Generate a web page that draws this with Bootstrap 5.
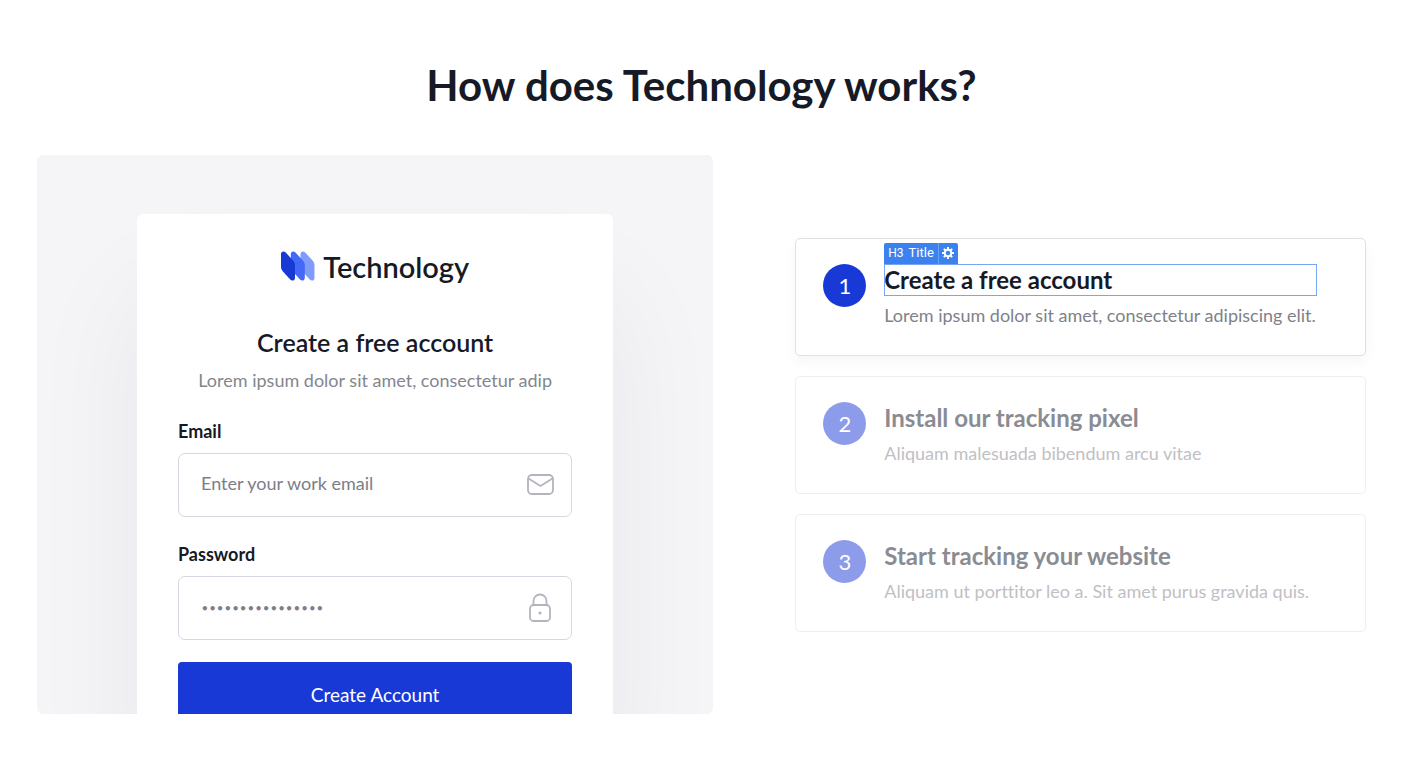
<!DOCTYPE html>
<html lang="en">
<head>
<meta charset="utf-8">
<meta name="viewport" content="width=device-width, initial-scale=1">
<title>How does Technology works?</title>
<link href="https://cdn.jsdelivr.net/npm/bootstrap@5.3.0/dist/css/bootstrap.min.css" rel="stylesheet">
<style>
  body { font-family: Lato, "Liberation Sans", sans-serif; font-variant-ligatures: none; color: #161a27; background: #fff; }
  .how-section { padding: 60px 37px; }
  .how-title { font-size: 42px; line-height: 50px; font-weight: 700; margin-bottom: 45px; }
  .how-grid { display: grid; grid-template-columns: 1.185fr 1fr; column-gap: 82px; align-items: center; }
  .preview-panel { background: #f5f5f7; border-radius: 6px; padding: 59px 100px 0; overflow: hidden; }
  .signup-card { background: #fff; border-radius: 6px; padding: 35px 41px 0; margin-bottom: -14px; box-shadow: 0 80px 120px rgba(20, 20, 80, .06); }
  .logo-text { font-size: 29px; line-height: 36px; font-weight: 600; }
  .signup-title { font-size: 25px; line-height: 30px; font-weight: 600; margin: 42px 0 11px; }
  .soft-text { font-size: 18px; line-height: 24px; color: #84868e; }
  .field-group { margin-top: 25px; }
  .soft-text + .field-group { margin-top: 27px; }
  .field-label { font-size: 18px; line-height: 24px; font-weight: 700; margin: 0 0 10px; }
  .field-box { height: 64px; padding: 0 60px 5px 22px; border: 1px solid #d6d6e0; border-radius: 7px; font-size: 18px; color: #161a27; }
  .field-box::placeholder { color: #7c7e88; opacity: 1; }
  .field-box.secret::placeholder { font-family: "DejaVu Sans", sans-serif; font-size: 12px; font-weight: 700; }
  .field-icon { position: absolute; right: 18px; top: 17px; pointer-events: none; }
  .btn-create { height: 66px; margin-top: 22px; font-size: 19px; color: #fff; background: #1939d7; border: 0; border-radius: 4px; }
  .btn-create:hover { color: #fff; background: #1530b8; }
  .step-list { gap: 20px; }
  .step-card { border: 1px solid #dfe0e6; border-radius: 5px; padding: 25px 48px 27px 27px; gap: 18px; background: #fff; }
  .step-card.current { box-shadow: 0 6px 14px rgba(20, 20, 60, .04); }
  .step-card.upcoming { border-color: #efeff2; }
  .step-number { flex: none; width: 43px; height: 43px; font-size: 22px; color: #fff; background: #1939d7; }
  .step-name { font-size: 24px; line-height: 32px; font-weight: 700; margin: 0 0 6px; }
  .step-note { font-size: 18px; line-height: 26px; color: #7f818a; margin: 0; }
  .upcoming .step-number { background: #8c9ceb; }
  .upcoming .step-name { color: #8a8c93; }
  .upcoming .step-note { color: #bfc0c5; }
  .step-name.selected { outline: 1px solid #78a6f7; outline-offset: -1px; }
  .element-tag { position: absolute; left: 0; bottom: 100%; height: 21px; font-family: Roboto, sans-serif; font-size: 13px; line-height: 20px; font-weight: 400; color: #fff; background: #3b82ef; border-radius: 2px 2px 0 0; }
  .tag-kind { font-size: 12px; padding: 0 5px 0 4px; }
  .tag-gear { width: 20px; height: 21px; border-left: 1px solid #6ba0f5; }
  @media (max-width: 1100px) {
    .how-grid { grid-template-columns: 1fr; row-gap: 40px; }
  }
  @media (max-width: 600px) {
    .how-section { padding: 40px 16px; }
    .preview-panel { padding: 32px 16px 0; }
    .signup-card { padding: 32px 20px 0; }
    .step-card { padding-right: 20px; }
  }
</style>
</head>
<body>
<main class="how-section container-fluid">
  <h2 class="how-title text-center">How does Technology works?</h2>
  <div class="how-grid">
    <div class="preview-panel">
      <form class="signup-card" onsubmit="return false">
        <div class="d-flex justify-content-center align-items-center gap-2">
          <svg width="34" height="32" viewBox="0 0 34 32" aria-hidden="true">
            <path fill="#7f9cfa" d="M19.500 3Q19.500 .4 22 .4Q23 .4 24.200 1.500L32 10Q33.500 12 33.500 14V26.500Q33.500 29.600 31 29.600Q29.700 29.600 28.700 28.500L21 20Q19.500 18 19.500 16Z"/>
            <path fill="#4569f7" d="M9.800 3Q9.800 .4 12.300 .4Q13.300 .4 14.500 1.500L22.300 10Q23.800 12 23.800 14V26.500Q23.800 29.600 21.300 29.600Q20 29.600 19 28.500L11.300 20Q9.800 18 9.800 16Z"/>
            <path fill="#1939d7" d="M0 3Q0 .4 2.500 .4Q3.500 .4 4.700 1.500L12.500 10Q14 12 14 14V26.500Q14 29.600 11.500 29.600Q10.200 29.600 9.200 28.500L1.500 20Q0 18 0 16Z"/>
          </svg>
          <span class="logo-text">Technology</span>
        </div>
        <h3 class="signup-title text-center">Create a free account</h3>
        <p class="soft-text text-center mb-0">Lorem ipsum dolor sit amet, consectetur adip</p>
        <div class="field-group">
          <label class="field-label d-block" for="email">Email</label>
          <div class="position-relative">
            <input class="form-control field-box" id="email" type="email" placeholder="Enter your work email">
            <svg class="field-icon" width="28" height="28" viewBox="0 0 28 28" fill="none" stroke="#b4b4bf" stroke-width="1.800" stroke-linejoin="round" aria-hidden="true">
              <rect x="2" y="5" width="25" height="19" rx="4"/><path d="M2.500 8.500 14.500 16 26.500 8.500"/>
            </svg>
          </div>
        </div>
        <div class="field-group">
          <label class="field-label d-block" for="password">Password</label>
          <div class="position-relative">
            <input class="form-control field-box secret" id="password" type="password" placeholder="••••••••••••••••">
            <svg class="field-icon" width="28" height="30" viewBox="0 0 28 30" fill="none" stroke="#b4b4bf" stroke-width="1.800" aria-hidden="true">
              <rect x="4" y="12" width="20" height="16" rx="3.500"/><path d="M7.500 12V8a6.500 6.500 0 0 1 13 0v4"/><circle cx="14" cy="20" r="1.600" fill="#b4b4bf" stroke="none"/>
            </svg>
          </div>
        </div>
        <button class="btn btn-create w-100" type="submit">Create Account</button>
      </form>
    </div>

    <div class="step-list d-grid">
      <article class="step-card current d-flex">
        <span class="step-number rounded-circle d-flex align-items-center justify-content-center">1</span>
        <div class="flex-grow-1">
          <h3 class="step-name selected position-relative">Create a free account
            <span class="element-tag d-flex align-items-center"><span class="tag-kind">H3</span><span class="pe-1">Title</span>
              <span class="tag-gear d-flex align-items-center justify-content-center">
                <svg width="12" height="12" viewBox="0 0 12 12" aria-hidden="true"><circle cx="6" cy="6" r="3.300" fill="none" stroke="#fff" stroke-width="2"/><path stroke="#fff" stroke-width="1.900" d="M6 0V2.500M6 9.500V12M0 6H2.500M9.500 6H12M1.800 1.800 3.500 3.500M8.500 8.500 10.200 10.200M1.800 10.200 3.500 8.500M8.500 3.500 10.200 1.800"/></svg>
              </span>
            </span>
          </h3>
          <p class="step-note">Lorem ipsum dolor sit amet, consectetur adipiscing elit.</p>
        </div>
      </article>
      <article class="step-card upcoming d-flex">
        <span class="step-number rounded-circle d-flex align-items-center justify-content-center">2</span>
        <div class="flex-grow-1">
          <h3 class="step-name">Install our tracking pixel</h3>
          <p class="step-note">Aliquam malesuada bibendum arcu vitae</p>
        </div>
      </article>
      <article class="step-card upcoming d-flex">
        <span class="step-number rounded-circle d-flex align-items-center justify-content-center">3</span>
        <div class="flex-grow-1">
          <h3 class="step-name">Start tracking your website</h3>
          <p class="step-note">Aliquam ut porttitor leo a. Sit amet purus gravida quis.</p>
        </div>
      </article>
    </div>
  </div>
</main>
<script src="https://cdn.jsdelivr.net/npm/bootstrap@5.3.0/dist/js/bootstrap.bundle.min.js"></script>
</body>
</html>
